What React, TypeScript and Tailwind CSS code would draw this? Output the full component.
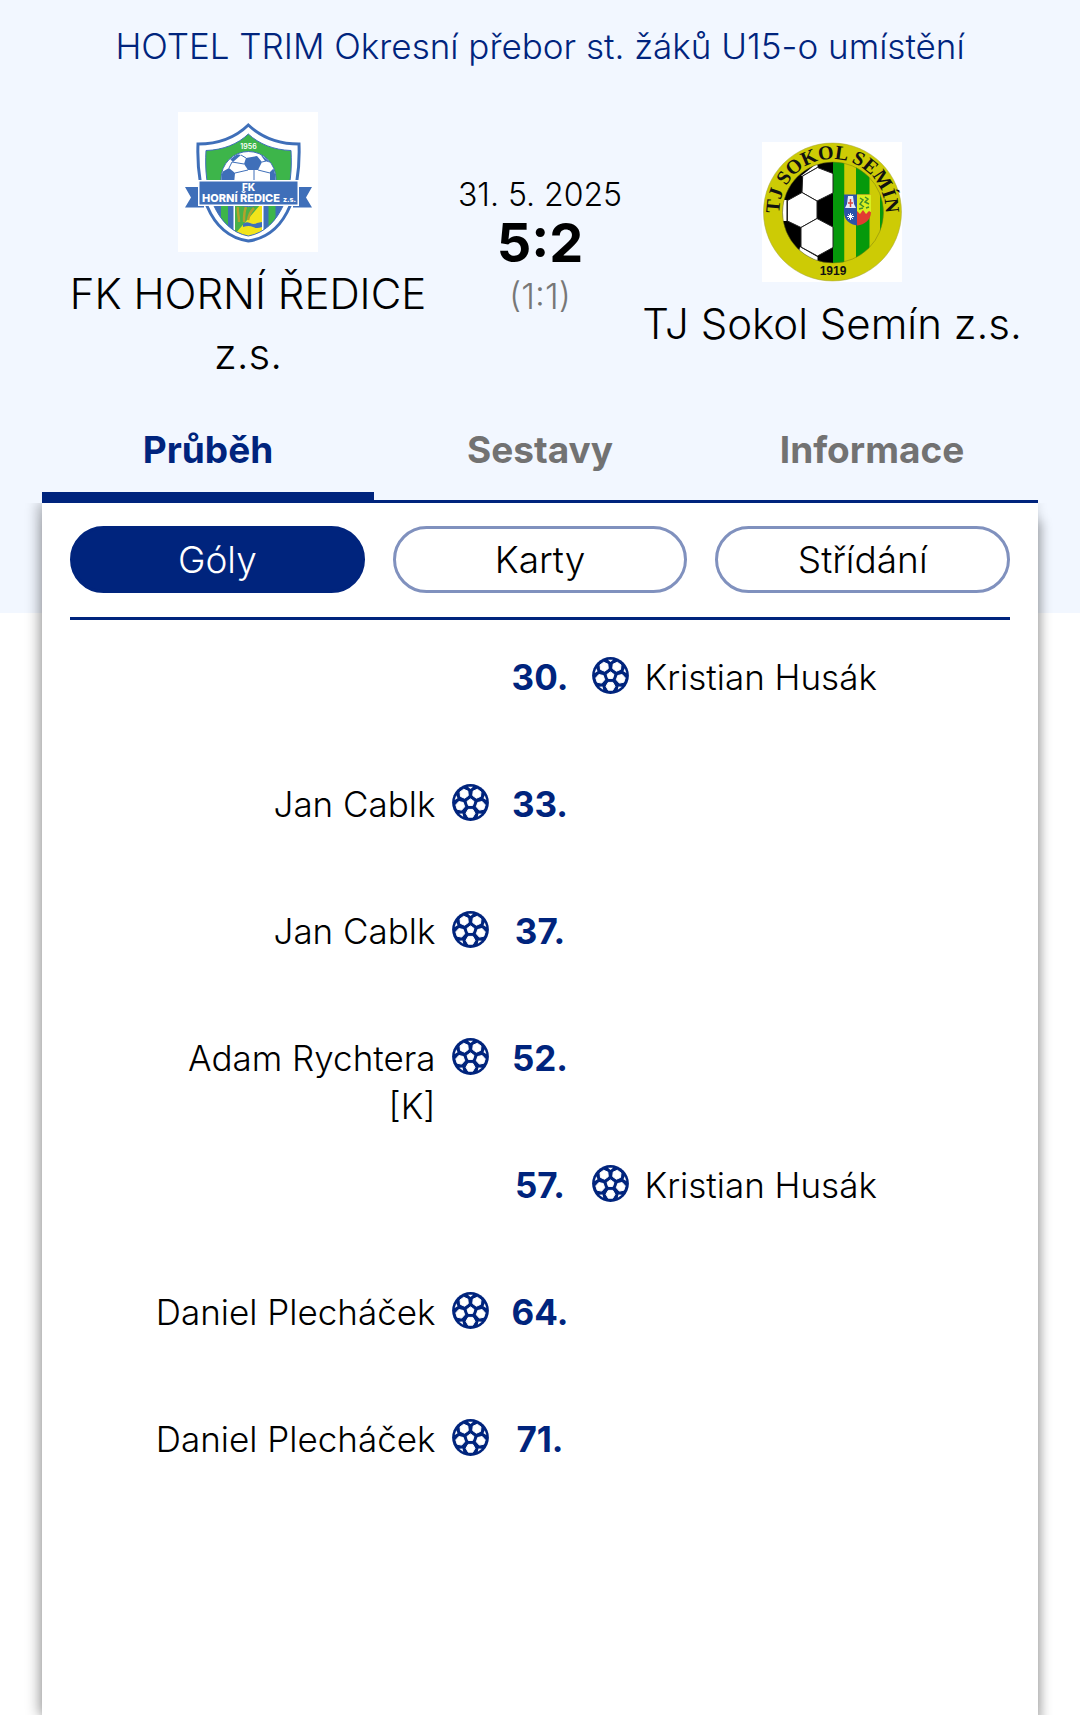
import { useState } from "react";
import clsx from "clsx";

type Goal = {
    id: number;
    minute: string;
    player: string;
    side: "home" | "away";
};

const goals: Goal[] = [
    { id: 1, minute: "30.", player: "Kristian Husák", side: "away" },
    { id: 2, minute: "33.", player: "Jan Cablk", side: "home" },
    { id: 3, minute: "37.", player: "Jan Cablk", side: "home" },
    { id: 4, minute: "52.", player: "Adam Rychtera [K]", side: "home" },
    { id: 5, minute: "57.", player: "Kristian Husák", side: "away" },
    { id: 6, minute: "64.", player: "Daniel Plecháček", side: "home" },
    { id: 7, minute: "71.", player: "Daniel Plecháček", side: "home" },
];

const tabs = ["Průběh", "Sestavy", "Informace"];
const filters = ["Góly", "Karty", "Střídání"];

// point on a circle, angle in degrees, 0 = up
const at = (cx: number, cy: number, r: number, deg: number) => {
    const a = ((deg - 90) * Math.PI) / 180;
    return [cx + r * Math.cos(a), cy + r * Math.sin(a)];
};

const polygon = (cx: number, cy: number, r: number, sides: number, rotate: number) =>
    Array.from({ length: sides }, (_, i) => at(cx, cy, r, rotate + (i * 360) / sides).join(",")).join(" ");

const BallIcon = () => (
    <svg viewBox="0 0 37 37" className="w-[37px] h-[37px] mt-1" aria-hidden="true">
        <circle cx="18.5" cy="18.5" r="18.4" fill="#00247d" />
        <g fill="#fff" stroke="#fff" strokeWidth="1" strokeLinejoin="round">
            <polygon points={polygon(18.5, 18.5, 3.6, 5, 0)} />
            {[36, 108, 180, 252, 324].map((deg) => {
                const [x, y] = at(18.5, 18.5, 10.8, deg);
                return <polygon key={deg} points={polygon(x, y, 4.5, 6, deg + 30)} />;
            })}
        </g>
        <g fill="#fff">
            {[0, 72, 144, 216, 288].map((deg) => {
                const points = [at(18.5, 18.5, 16, deg - 9), at(18.5, 18.5, 16, deg + 9), at(18.5, 18.5, 13.6, deg)];
                return <polygon key={deg} points={points.join(" ")} />;
            })}
        </g>
    </svg>
);

const HomeLogo = () => (
    <svg viewBox="0 0 140 140" className="w-[140px] h-[140px]" role="img" aria-label="FK Horní Ředice">
        <defs>
            <clipPath id="home-shield">
                <path d="M70.3 22C60 32 45 38 28 38.500C27 56 28 76 36 94C43 109 54 121 70.300 124C87 121 98 109 105 94C113 76 114 56 113 38.500C96 38 81 32 70.300 22Z" />
            </clipPath>
            <clipPath id="home-ball">
                <circle cx="70.5" cy="67" r="27" />
            </clipPath>
        </defs>
        <rect width="140" height="140" fill="#fff" />
        <path
            d="M70.3 13C58 25 40 32 20 32C19 58 22 76 29 94C37 113 50 126 70.300 129C91 126 104 113 112 94C119 76 122 58 121 32C101 32 83 25 70.300 13Z"
            fill="#fff"
            stroke="#3f6fb9"
            strokeWidth="3"
        />
        <g clipPath="url(#home-shield)">
            <rect width="140" height="92" fill="#3db54a" />
            <rect y="92" width="140" height="40" fill="#3f6fb9" />
            <rect x="43" y="92" width="7" height="40" fill="#3db54a" />
            <rect x="90.500" y="92" width="7" height="40" fill="#3db54a" />
            <rect x="55.500" y="92" width="30" height="34" fill="#fff" />
            <path d="M57 92H84V124H57Z" fill="#f2e41b" />
            <path d="M57 92H83L57 122Z" fill="#49b148" />
            <path d="M61 110C61 103 59 99 60 95M66 110C66 103 66 99 68 95M70 108C71 103 73 99 76 96" stroke="#b3a12c" strokeWidth="2.5" fill="none" />
            <path d="M65 112Q68 109 72 111T79 111L84 110V115Q79 117 75 115T65 115Z" fill="#3f6fb9" />
        </g>
        <path
            d="M70.3 22C60 32 45 38 28 38.500C27 56 28 76 36 94C43 109 54 121 70.300 124C87 121 98 109 105 94C113 76 114 56 113 38.500C96 38 81 32 70.300 22Z"
            fill="none"
            stroke="#3f6fb9"
            strokeWidth="1"
        />
        <circle cx="70.5" cy="67" r="27.5" fill="#fff" stroke="#3f6fb9" strokeWidth="1" />
        <g clipPath="url(#home-ball)">
            <g fill="#3f6fb9">
                <path d="M68 46L79 44L84 50L80 58L70 58L66 52Z" />
                <path d="M44 60L51 56L57 61L56 72H42Z" />
                <path d="M92 60L96 56L100 62V72H92Z" />
                <path d="M52 47L59 42L63 43L55 50Z" />
                <path d="M82 42L89 46L93 51L87 49Z" />
            </g>
            <path d="M66 52L54 50L51 56M57 61L70 58M76 58V72M80 58L92 61M84 50L88 49M63 43L68 46" stroke="#3f6fb9" strokeWidth="1" fill="none" />
        </g>
        <text x="70.500" y="36.500" textAnchor="middle" fontSize="7" fontWeight="600" fill="#fff">1956</text>
        <path d="M7 75H26V95.500H7L13 85.500Z" fill="#3f6fb9" />
        <path d="M134 75H115V95.500H134L128 85.500Z" fill="#3f6fb9" />
        <rect x="20" y="68" width="101" height="26" fill="#fff" />
        <rect x="21.500" y="69.500" width="98" height="23" fill="#3f6fb9" />
        <text x="70.500" y="78.500" textAnchor="middle" fontSize="10" fontWeight="800" fill="#fff">FK</text>
        <text x="24" y="90" fontSize="11" fontWeight="800" fill="#fff">HORNÍ ŘEDICE</text>
        <text x="105" y="90" fontSize="7" fontWeight="800" fill="#fff">z.s.</text>
    </svg>
);

const AwayLogo = () => (
    <svg viewBox="0 0 140 140" className="w-[140px] h-[140px] overflow-visible" role="img" aria-label="TJ Sokol Semín">
        <defs>
            <clipPath id="away-inner">
                <circle cx="71" cy="70.500" r="50.500" />
            </clipPath>
            <clipPath id="away-arms">
                <path d="M82 52.500H109V70C109 78 102 83 95.500 83.500C88 83 82 78 82 70Z" />
            </clipPath>
            <path id="away-arc" d="M17.500 72V70A53 53 0 0 1 123.500 70V72" />
        </defs>
        <rect width="140" height="140" fill="#fff" />
        <circle cx="70.500" cy="70" r="69" fill="#cdcb05" stroke="#a3a23a" strokeWidth="0.5" />
        <g clipPath="url(#away-inner)">
            <rect x="0" y="0" width="71" height="140" fill="#000" />
            <rect x="71" width="11.500" height="140" fill="#06990b" />
            <rect x="82.500" width="43" height="140" fill="#cdcb05" />
            <rect x="94" width="13.500" height="140" fill="#06990b" />
            <rect x="118" width="8" height="140" fill="#06990b" />
            <g fill="#fff">
                <path d="M20 58H24.500V79H20Z" />
                <path d="M39 34L55.500 21V25L40 34Z" />
                <path d="M38 105L55.500 115V121L37 110Z" />
            </g>
            <g fill="#fff" stroke="#222" strokeWidth="1">
                <path d="M40 50.500L40.700 34L55.500 25.500L71 31.500V51L55 59Z" />
                <path d="M25.500 58.500L40 50.500L55 59V76.500L39 85.500L25.500 79Z" />
                <path d="M39 85.500L55 76.500L71 85V105.500L55.500 114L39 105Z" />
            </g>
        </g>
        <circle cx="71" cy="70.500" r="50.500" fill="none" stroke="#7d7d10" strokeWidth="0.5" />
        <g clipPath="url(#away-arms)">
            <rect x="81" y="52" width="14" height="32" fill="#2c52a8" />
            <rect x="95" y="52" width="15" height="32" fill="#e23b32" />
            <path d="M95 52H110V71L107 69L104 72L101 68L98 72L95 69Z" fill="#d9ef1f" />
            <path d="M98 56L101 58L98 62L102 65M103 55L106 57L103 60L107 62M97 67L101 66M104 66L107 65" stroke="#3f8f2a" strokeWidth="1.500" fill="none" />
            <path d="M86 54H91L92 62L94 66H83L85 62Z" fill="#e9edf8" />
            <path d="M88.500 57V65M86 61H91" stroke="#d8463e" strokeWidth="1.500" />
            <path d="M88.500 71V78M85 74.500H92M86 72L91 77M91 72L86 77" stroke="#fff" strokeWidth="1" />
        </g>
        <text className="font-['Liberation_Serif',serif]" fontSize="20" fontWeight="700" fill="#111">
            <textPath href="#away-arc" startOffset="50%" textAnchor="middle">TJ SOKOL SEMÍN</textPath>
        </text>
        <text x="71" y="132.500" textAnchor="middle" className="font-['Liberation_Sans',sans-serif]" fontSize="12" fontWeight="700" fill="#111">1919</text>
    </svg>
);

const GoalRow = ({ goal }: { goal: Goal }) => {
    const home = goal.side === "home";
    return (
        <li className="grid grid-cols-[minmax(0,1fr)_37px_103px_37px_minmax(0,1fr)] items-start min-h-[127px] text-[35px] leading-[48px]">
            <span className="pr-4 text-right">{home && goal.player}</span>
            <span>{home && <BallIcon />}</span>
            <span className="text-center font-bold text-[#00247d]">{goal.minute}</span>
            <span>{!home && <BallIcon />}</span>
            <span className="pl-4">{!home && goal.player}</span>
        </li>
    );
};

const App = () => {
    const [tab, setTab] = useState("Průběh");
    const [filter, setFilter] = useState("Góly");

    return (
        <div className="flex flex-col min-h-screen bg-white text-black font-[350] font-['Inter','Liberation_Sans',sans-serif]">
            <header className="bg-[#f2f7ff] px-[42px] pb-[110px]">
                <h1 className="pt-5 pb-10 text-center text-[35px] leading-[52px] text-[#00247d]">
                    HOTEL TRIM Okresní přebor st. žáků U15-o umístění
                </h1>

                <div className="grid grid-cols-[1fr_172px_1fr] items-center">
                    <div className="flex flex-col items-center gap-3 px-4">
                        <HomeLogo />
                        <h2 className="text-center text-[42px] leading-[60px]">FK HORNÍ ŘEDICE z.s.</h2>
                    </div>
                    <div className="text-center">
                        <p className="text-[32px] leading-[44px]">31. 5. 2025</p>
                        <p className="text-[54px] leading-[52px] font-bold">5:2</p>
                        <p className="text-[35px] leading-[54px] text-[#777]">(1:1)</p>
                    </div>
                    <div className="flex flex-col items-center gap-3">
                        <AwayLogo />
                        <h2 className="text-center text-[42px] leading-[60px]">TJ Sokol Semín z.s.</h2>
                    </div>
                </div>

                <nav className="grid grid-cols-3 border-b-3 border-[#00247d]">
                    {tabs.map((name) => (
                        <button
                            key={name}
                            onClick={() => setTab(name)}
                            className={clsx(
                                "pt-[38px] pb-[14px] text-[37px] leading-[56px] font-bold border-b-8",
                                tab === name ? "text-[#00247d] border-[#00247d]" : "text-[#727272] border-transparent"
                            )}
                        >
                            {name}
                        </button>
                    ))}
                </nav>
            </header>

            <main className="flex-1 -mt-[110px] mx-[42px] bg-white pt-[23px] [clip-path:inset(0_-24px)] shadow-[4px_18px_10px_rgba(0,0,0,0.25),-4px_0_12px_rgba(0,0,0,0.3)]">
                <div className="mx-7 pb-6 grid grid-cols-3 gap-7 border-b-3 border-[#00247d]">
                    {filters.map((name) => (
                        <button
                            key={name}
                            onClick={() => setFilter(name)}
                            className={clsx(
                                "h-[67px] rounded-full border-3 text-[37px]",
                                filter === name ? "bg-[#00247d] border-[#00247d] text-white" : "bg-white border-[#8091be]"
                            )}
                        >
                            {name}
                        </button>
                    ))}
                </div>

                <ul className="mt-[33px] px-[102px]">
                    {goals.map((goal) => (
                        <GoalRow key={goal.id} goal={goal} />
                    ))}
                </ul>
            </main>
        </div>
    );
};

export default App;
